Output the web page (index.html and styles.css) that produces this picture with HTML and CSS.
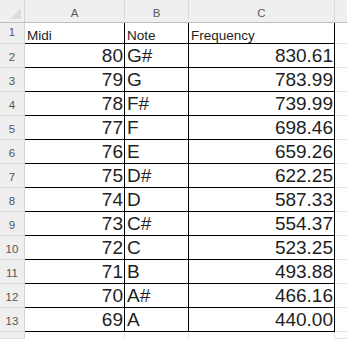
FILE: index.html
```html
<!DOCTYPE html>
<html>
<head>
<meta charset="utf-8">
<link rel="stylesheet" href="styles.css">
</head>
<body>
<div class="sheet">
  <div class="corner"><svg class="tri" width="11" height="11" viewBox="0 0 11 11"><polygon points="11,0 11,11 0,11" fill="#dcdcdc"/></svg></div>
  <div class="colhead">A</div>
  <div class="colhead">B</div>
  <div class="colhead">C</div>
  <div class="colhead last"></div>

  <div class="rowhead r1">1</div>
  <div class="cell a hdr">Midi</div>
  <div class="cell b hdr">Note</div>
  <div class="cell c hdr">Frequency</div>
  <div class="cell d"></div>

  <div class="rowhead">2</div><div class="cell a num">80</div><div class="cell b">G#</div><div class="cell c num">830.61</div><div class="cell d"></div>
  <div class="rowhead">3</div><div class="cell a num">79</div><div class="cell b">G</div><div class="cell c num">783.99</div><div class="cell d"></div>
  <div class="rowhead">4</div><div class="cell a num">78</div><div class="cell b">F#</div><div class="cell c num">739.99</div><div class="cell d"></div>
  <div class="rowhead">5</div><div class="cell a num">77</div><div class="cell b">F</div><div class="cell c num">698.46</div><div class="cell d"></div>
  <div class="rowhead">6</div><div class="cell a num">76</div><div class="cell b">E</div><div class="cell c num">659.26</div><div class="cell d"></div>
  <div class="rowhead">7</div><div class="cell a num">75</div><div class="cell b">D#</div><div class="cell c num">622.25</div><div class="cell d"></div>
  <div class="rowhead">8</div><div class="cell a num">74</div><div class="cell b">D</div><div class="cell c num">587.33</div><div class="cell d"></div>
  <div class="rowhead">9</div><div class="cell a num">73</div><div class="cell b">C#</div><div class="cell c num">554.37</div><div class="cell d"></div>
  <div class="rowhead">10</div><div class="cell a num">72</div><div class="cell b">C</div><div class="cell c num">523.25</div><div class="cell d"></div>
  <div class="rowhead">11</div><div class="cell a num">71</div><div class="cell b">B</div><div class="cell c num">493.88</div><div class="cell d"></div>
  <div class="rowhead">12</div><div class="cell a num">70</div><div class="cell b">A#</div><div class="cell c num">466.16</div><div class="cell d"></div>
  <div class="rowhead">13</div><div class="cell a num">69</div><div class="cell b">A</div><div class="cell c num">440.00</div><div class="cell d"></div>

  <div class="rowhead"></div><div class="cell e"></div><div class="cell e"></div><div class="cell e"></div><div class="cell d"></div>
</div>
</body>
</html>
```

FILE: styles.css
```css
html, body {
  margin: 0;
  padding: 0;
  background: #ffffff;
  overflow: hidden;
}
.sheet {
  display: grid;
  grid-template-columns: 25px 100px 64px 146px 1fr;
  grid-template-rows: 23px 21px repeat(12, 24px) 7px;
  width: 347px;
  font-family: "Liberation Sans", Arial, sans-serif;
}
.sheet > div {
  box-sizing: border-box;
}
.corner {
  background: #efefef;
  border-right: 1px solid #d4d4d4;
  border-bottom: 1px solid #bdbdbd;
  position: relative;
}
.tri {
  position: absolute;
  left: 10px;
  top: 8px;
}
.colhead {
  background: #efefef;
  border-right: 1px solid #dadada;
  border-bottom: 1px solid #bdbdbd;
  color: #595959;
  font-size: 11.5px;
  text-align: center;
  line-height: 22px;
  padding-top: 2px;
}
.colhead.last {
  border-right: none;
}
.rowhead {
  background: #efefef;
  border-right: 1px solid #d4d4d4;
  border-bottom: 1px solid #dadada;
  color: #555555;
  font-size: 11.5px;
  display: flex;
  align-items: flex-end;
  justify-content: center;
  padding-bottom: 3px;
  line-height: 13px;
}
.rowhead.r1 {
  padding-bottom: 4px;
}
.cell {
  color: #1e1e1e;
  font-size: 19px;
  line-height: 23px;
  padding: 0 1px 0 2px;
  white-space: nowrap;
  overflow: hidden;
}
.cell.a, .cell.b, .cell.c {
  border-right: 1px solid #000000;
  border-bottom: 1px solid #000000;
}
.cell.num {
  text-align: right;
}
.cell.hdr {
  font-size: 13.5px;
  line-height: 15px;
  display: flex;
  align-items: flex-end;
}
.cell.d {
  border-bottom: 1px solid #e1e1e1;
}
.cell.e {
  border-right: 1px solid #e1e1e1;
}
```
